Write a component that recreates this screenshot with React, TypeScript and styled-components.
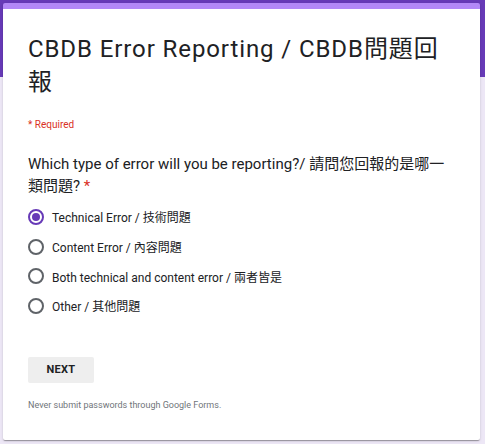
import React, { useState } from 'react';
import styled, { createGlobalStyle } from 'styled-components';

const GlobalStyle = createGlobalStyle`
  html, body {
    margin: 0;
    padding: 0;
  }
  body {
    background: linear-gradient(to bottom, #673ab7 0, #673ab7 77px, #ede7f6 77px, #ede7f6 100%);
    min-height: 100vh;
    font-family: Roboto, "Noto Sans CJK TC", Arial, sans-serif;
  }
`;

const Page = styled.div`
  padding: 3px 5px 0 3px;
`;

const Card = styled.main`
  background: #fff;
  border-top: 6px solid #b388f7;
  border-radius: 2px;
  height: 437px;
  box-sizing: border-box;
  box-shadow: 0 2px 1px -1px rgba(0, 0, 0, 0.2), 0 1px 1px 0 rgba(0, 0, 0, 0.14), 0 1px 3px 0 rgba(0, 0, 0, 0.12);
  padding: 24px 24px 0 25px;
  display: flex;
  flex-direction: column;
`;

const Title = styled.h1`
  margin: 0;
  max-width: 420px;
  font-size: 24px;
  line-height: 33px;
  letter-spacing: 0.9px;
  font-weight: 400;
  color: #202124;
`;

const Required = styled.p`
  margin: 18px 0 0;
  font-size: 10px;
  line-height: 16px;
  color: #d93025;
`;

const Question = styled.h2`
  margin: 21px 0 0;
  font-size: 15px;
  line-height: 21.5px;
  font-weight: 400;
  color: #202124;
`;

const Star = styled.span`
  color: #d93025;
`;

const Options = styled.div`
  margin-top: 5px;
  display: flex;
  flex-direction: column;
`;

const Option = styled.label`
  display: flex;
  align-items: center;
  gap: 8px;
  height: 29.7px;
  cursor: pointer;
`;

const Radio = styled.span<{ $checked: boolean }>`
  width: 16px;
  height: 16px;
  box-sizing: border-box;
  border-radius: 50%;
  border: 2px solid ${({ $checked }) => ($checked ? '#673ab7' : '#5f6368')};
  display: flex;
  align-items: center;
  justify-content: center;
  flex-shrink: 0;

  &::after {
    content: '';
    width: 8px;
    height: 8px;
    border-radius: 50%;
    background: #673ab7;
    display: ${({ $checked }) => ($checked ? 'block' : 'none')};
  }
`;

const OptionText = styled.span`
  font-size: 12px;
  color: #202124;
`;

const NextButton = styled.button`
  margin-top: 36px;
  align-self: flex-start;
  width: 66px;
  height: 26px;
  border: none;
  border-radius: 2px;
  background: #eeeeee;
  font-family: Roboto, Arial, sans-serif;
  font-size: 11px;
  font-weight: 700;
  color: #202124;
  letter-spacing: 0.3px;
  cursor: pointer;
`;

const Footer = styled.p`
  margin: 16px 0 0;
  font-size: 9px;
  line-height: 12px;
  color: #70757a;
`;

const OPTIONS = [
  'Technical Error / 技術問題',
  'Content Error / 內容問題',
  'Both technical and content error / 兩者皆是',
  'Other / 其他問題',
];

const App = () => {
  const [selected, setSelected] = useState(0);

  return (
    <>
      <GlobalStyle />
      <Page>
        <Card>
          <Title>CBDB Error Reporting / CBDB問題回報</Title>
          <Required>* Required</Required>
          <Question>
            Which type of error will you be reporting?/ 請問您回報的是哪一類問題? <Star>*</Star>
          </Question>
          <Options role="radiogroup">
            {OPTIONS.map((text, i) => (
              <Option key={text} onClick={() => setSelected(i)}>
                <Radio $checked={selected === i} />
                <OptionText>{text}</OptionText>
              </Option>
            ))}
          </Options>
          <NextButton type="button">NEXT</NextButton>
          <Footer>Never submit passwords through Google Forms.</Footer>
        </Card>
      </Page>
    </>
  );
};

export default App;
